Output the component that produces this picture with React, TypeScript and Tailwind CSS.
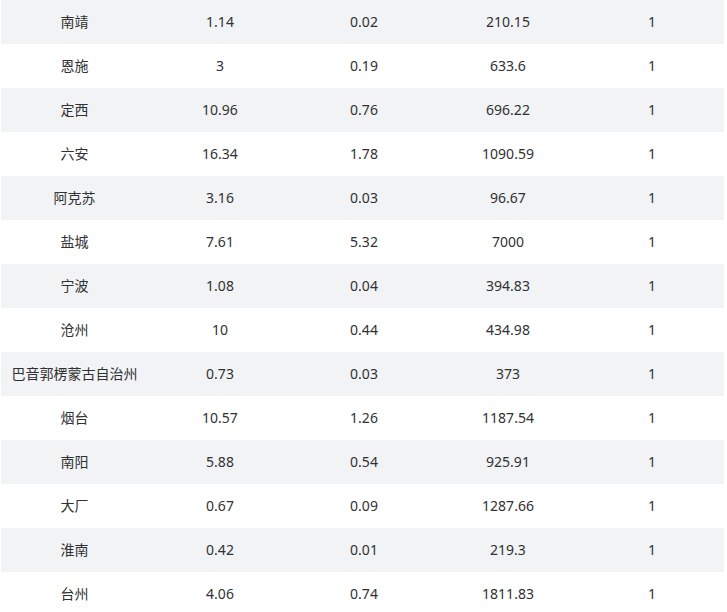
const rows: [string, string, string, string, string][] = [
  ['南靖', '1.14', '0.02', '210.15', '1'],
  ['恩施', '3', '0.19', '633.6', '1'],
  ['定西', '10.96', '0.76', '696.22', '1'],
  ['六安', '16.34', '1.78', '1090.59', '1'],
  ['阿克苏', '3.16', '0.03', '96.67', '1'],
  ['盐城', '7.61', '5.32', '7000', '1'],
  ['宁波', '1.08', '0.04', '394.83', '1'],
  ['沧州', '10', '0.44', '434.98', '1'],
  ['巴音郭楞蒙古自治州', '0.73', '0.03', '373', '1'],
  ['烟台', '10.57', '1.26', '1187.54', '1'],
  ['南阳', '5.88', '0.54', '925.91', '1'],
  ['大厂', '0.67', '0.09', '1287.66', '1'],
  ['淮南', '0.42', '0.01', '219.3', '1'],
  ['台州', '4.06', '0.74', '1811.83', '1'],
];

export default function App() {
  return (
    <div className="h-[612px] overflow-hidden bg-white">
      <div
        className="ml-px w-[723px] text-[14px] text-[#303133]"
        style={{ fontFamily: '"Noto Sans", "Noto Sans CJK SC", sans-serif' }}
      >
        {rows.map((r, i) => (
          <div key={i} className={`flex h-11 items-center pb-0.5 ${i % 2 === 0 ? 'bg-[#f2f3f5]' : 'bg-white'}`}>
            <div className="w-[147px] text-center">{r[0]}</div>
            <div className="w-[144px] text-center">{r[1]}</div>
            <div className="w-[144px] text-center">{r[2]}</div>
            <div className="w-[144px] text-center">{r[3]}</div>
            <div className="w-[144px] text-center">{r[4]}</div>
          </div>
        ))}
      </div>
    </div>
  );
}
